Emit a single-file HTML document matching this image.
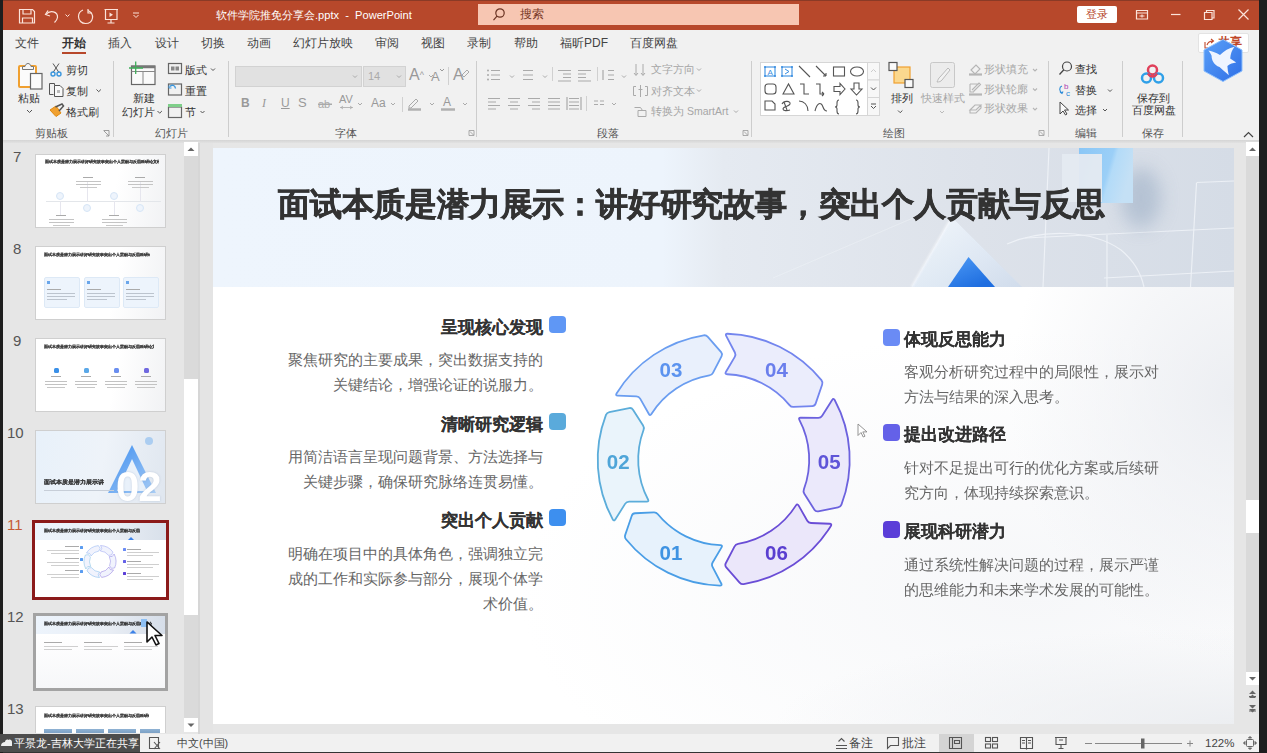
<!DOCTYPE html>
<html><head><meta charset="utf-8">
<style>
*{margin:0;padding:0;box-sizing:border-box}
html,body{width:1267px;height:753px;overflow:hidden;background:#e6e6e6;font-family:"Liberation Sans",sans-serif}
.a{position:absolute;white-space:nowrap}
#tb{left:0;top:0;width:1267px;height:30px;background:#b7482b}
#tabs{left:0;top:30px;width:1267px;height:26px;background:#f1f1f1}
#rib{left:0;top:56px;width:1267px;height:84px;background:#f1f1f1}
.tab{font-size:12px;color:#444;top:37px;line-height:13px}
.rl{font-size:10.5px;color:#333;line-height:12px}
.gl{font-size:10.5px;color:#555;line-height:12px;top:127px}
.dis{color:#a6a6a6}
.sep{width:1px;background:#cfcfcf;top:61px;height:77px}
#left{left:3px;top:143px;width:181px;height:591px;background:#e6e6e6}
.thumb{position:absolute;left:35px;width:131px;height:74px;background:#fff;border:1px solid #c9c9c9;overflow:hidden}
.num{position:absolute;font-size:15px;color:#444;left:13px}
#slide{left:213px;top:148px;width:1021px;height:576px;background:#fff;overflow:hidden}
#status{left:0;top:734px;width:1267px;height:18px;background:#f1f1f1}
.st{font-size:11.5px;color:#444;top:737px;line-height:13px}
.h{font-size:17px;font-weight:bold;color:#333;line-height:20px;-webkit-text-stroke:0.1px #333}
.d{font-size:15px;color:#666;line-height:25px}
.mk{position:absolute;width:17px;height:17px;border-radius:4px}
</style></head><body>
<!-- title bar -->
<div class="a" id="tb"></div>
<div class="a" style="left:0;top:0;width:1267px;height:1px;background:#8a3a26"></div>
<div class="a" style="left:0;top:0;width:3px;height:753px;background:#1e1e1e;z-index:50"></div>
<div class="a" style="left:1259px;top:0;width:8px;height:753px;background:#1e1e1e;z-index:50"></div>
<div class="a" style="left:216px;top:8px;font-size:11.1px;color:#fff;line-height:14px">软件学院推免分享会.pptx&nbsp;&nbsp;-&nbsp;&nbsp;PowerPoint</div>
<div class="a" style="left:478px;top:4px;width:321px;height:21px;background:#f7c6b2"></div>
<div class="a" style="left:520px;top:8px;font-size:11.5px;color:#7a3a28;line-height:13px">搜索</div>
<div class="a" style="left:1077px;top:6px;width:40px;height:17px;background:#fff;border-radius:2px"></div>
<div class="a" style="left:1086px;top:8px;font-size:11px;color:#b7482b;line-height:13px">登录</div>

<!-- tabs -->
<div class="a" id="tabs"></div>
<div class="a tab" style="left:15px">文件</div>
<div class="a tab" style="left:62px;font-weight:bold;color:#333">开始</div>
<div class="a" style="left:62px;top:52px;width:24px;height:2px;background:#b7482b"></div>
<div class="a tab" style="left:108px">插入</div>
<div class="a tab" style="left:155px">设计</div>
<div class="a tab" style="left:201px">切换</div>
<div class="a tab" style="left:247px">动画</div>
<div class="a tab" style="left:293px">幻灯片放映</div>
<div class="a tab" style="left:375px">审阅</div>
<div class="a tab" style="left:421px">视图</div>
<div class="a tab" style="left:467px">录制</div>
<div class="a tab" style="left:514px">帮助</div>
<div class="a tab" style="left:560px">福昕PDF</div>
<div class="a tab" style="left:630px">百度网盘</div>

<!-- ribbon -->
<div class="a" id="rib"></div>
<div class="a" style="left:0;top:140px;width:1267px;height:3px;background:linear-gradient(180deg,#d4d4d4,#e2e2e2)"></div>
<!-- title bar icons -->
<svg class="a" style="left:0;top:0;z-index:5" width="1267" height="30" viewBox="0 0 1267 30" fill="none" stroke="#fbe3da" stroke-width="1.2">
<path d="M19.5 9.5h13l2 2v11.5h-15z"/><path d="M23 9.5v4.5h8v-4.5"/><path d="M22.5 23v-5h10v5"/>
<path d="M48 10.5l-2.5 4 4.5 1.5"/><path d="M46 14.5c4-5 12-3 11.5 3c-0.3 2-1.5 3.5-3 5"/>
<path d="M65.5 14.5l2 2l2-2" stroke-width="1"/>
<path d="M88 10.5c3 1.5 5 4 4.5 7.5c-0.6 3.5-3.5 5.5-7 5.5c-4 0-7-3-7-7c0-3 2-5.5 4.5-6.5"/><path d="M88 9v4h4"/>
<path d="M104.5 9.5h13.5M105.5 9.5v10h11.5v-10M111 19.5v3.5M107.5 23h7"/><path d="M109.5 12.5v4.5l3.5-2.2z" fill="#fbe3da" stroke="none"/>
<path d="M133 13h6M133.5 15l2.5 2.5l2.5-2.5" stroke-width="1"/>
<circle cx="500" cy="13" r="4.2" stroke="#6b3323"/><path d="M497 16.2l-3.5 4" stroke="#6b3323"/>
<path d="M1136.5 10.5h11v8.5h-11zM1136.5 13h11M1139.5 16h5M1142 14.5v3"/>
<path d="M1171 14.5h9.5"/>
<path d="M1204.5 12.5h7.5v7h-7.5zM1206.5 12.5v-2h7.5v7.5h-2"/>
<path d="M1238.5 9.5l10 10M1248.5 9.5l-10 10"/>
</svg>
<!-- ribbon icons -->
<svg class="a" style="left:0;top:56px" width="1267" height="84" viewBox="0 56 1267 84" fill="none" stroke-width="1">
<!-- paste -->
<rect x="19" y="66" width="17" height="21" rx="1" stroke="#f0a030" stroke-width="2" fill="#fbfbfb"/>
<path d="M22.5 69.5v-3h2.5c0.5-2 1.5-3 3-3s2.5 1 3 3h2.5v3z" fill="#f6f6f6" stroke="#777"/>
<rect x="30.5" y="73.5" width="11.5" height="15.5" fill="#fbfbfb" stroke="#666" stroke-width="1.2"/>
<path d="M27 110l2.5 2.5l2.5-2.5" stroke="#555"/>
<!-- scissors -->
<path d="M53 63.5l6 9M59 63.5l-6 9" stroke="#555"/><circle cx="53" cy="74" r="2" stroke="#3a96dd" stroke-width="1.4"/><circle cx="59" cy="74" r="2" stroke="#3a96dd" stroke-width="1.4"/>
<!-- copy -->
<path d="M53.5 94.5h-4v-11h5v2" stroke="#555"/><path d="M54.5 85.5h5.5l3 3v8h-8.5z" stroke="#555" fill="#fafafa"/><rect x="57" y="90" width="3" height="3" fill="#bbb"/>
<path d="M96.5 89.5l2.2 2.2l2.2-2.2" stroke="#555"/>
<!-- format painter -->
<path d="M50 110l6-4l5 7l-5 3.5z" fill="#f0a030" stroke="#e08a10"/><path d="M55.5 107l6.5-3l1.5 2l-4.5 5" stroke="#555" stroke-width="1.5"/>
<!-- new slide -->
<rect x="131.5" y="66" width="23.5" height="18.5" stroke="#666" stroke-width="1.2" fill="#fafafa"/><path d="M131.5 67h23.5" stroke="#777" stroke-width="2.5"/><path d="M131.5 71.5h23.5M143 71.5v13" stroke="#888"/>
<path d="M129 68h14M135.7 61.5v12.5" stroke="#3fae5a" stroke-width="1.3"/>
<path d="M157.5 111l2.2 2.2l2.2-2.2" stroke="#555"/>
<!-- layout -->
<rect x="168.5" y="63.5" width="13" height="10" stroke="#666" stroke-width="1.2"/><rect x="171" y="66.5" width="3.5" height="4" fill="#888" stroke="none"/><rect x="175.5" y="66.5" width="3.5" height="4" fill="#888" stroke="none"/>
<path d="M211 68.5l2 2l2-2" stroke="#555"/>
<!-- reset -->
<rect x="168.5" y="84" width="13" height="11" stroke="#666" stroke-width="1.2"/><path d="M170 86.5c2-2 5-1.5 5.5 2" stroke="#3a96dd" stroke-width="1.4"/><path d="M169 85.5v2.5h2.5" stroke="#3a96dd"/>
<!-- section -->
<rect x="168.5" y="107" width="13" height="10.5" stroke="#666" stroke-width="1.2"/><rect x="168" y="104" width="14" height="3" fill="#7fcf8a" stroke="none"/>
<path d="M200.5 111l2 2l2-2" stroke="#555"/>
<!-- font combos -->
<rect x="235.5" y="66.5" width="126" height="20" fill="#e1e1e1" stroke="#d2d2d2"/><rect x="363.5" y="66.5" width="42" height="20" fill="#e1e1e1" stroke="#d2d2d2"/>
<path d="M353 75.5l2 2l2-2M397 75.5l2 2l2-2" stroke="#aaa"/>
<path d="M429 75l2 2l2-2M391 103l2 2l2-2M358 103l2 2l2-2M463 103l2 2l2-2M430 103l2 2l2-2M510 75.5l2 2l2-2M543 75.5l2 2l2-2M622 75.5l2 2l2-2M612 103l2 2l2-2" stroke="#aaa"/>
<path d="M448.5 67v18M402.5 97v15M552.5 67v14M597.5 67v14M586.5 96v15" stroke="#d0d0d0"/>
<path d="M408 109.5h13" stroke="#b0b0b0" stroke-width="2.5"/><path d="M409 106l7-7l2 2l-7 7h-2z" stroke="#aaa"/>
<path d="M441 109.5h14" stroke="#b0b0b0" stroke-width="2.5"/>
<path d="M318 104h14" stroke="#aaa"/>
<path d="M340 107.5h13M341 107.5l2 -1.5M341 107.5l2 1.5M352 107.5l-2-1.5M352 107.5l-2 1.5" stroke="#aaa" stroke-width="0.8"/>
<!-- eraser -->
<path d="M462 75l5-5l2 2l-5 5z" stroke="#aaa"/>
<!-- paragraph icons -->
<g stroke="#aaa" stroke-width="1.2">
<path d="M491 70.5h9M491 75h9M491 79.5h9M523 70.5h10M523 75h10M523 79.5h10"/>
<path d="M558 70.5h13M563 74h8M563 77.5h8M558 81h13M578 70.5h13M578 74h8M578 77.5h8M578 81h13"/>
<path d="M608 70.5h6M608 75h6M608 79.5h6M603 70v10"/>
<path d="M488 98.5h12M488 102h8M488 105.5h12M488 109h8"/>
<path d="M508 98.5h12M510 102h8M508 105.5h12M510 109h8"/>
<path d="M528 98.5h12M532 102h8M528 105.5h12M532 109h8"/>
<path d="M548 98.5h12M548 102h12M548 105.5h12M548 109h12"/>
<path d="M569 98.5h10M569 102h10M569 105.5h10M569 109h10M567 97v13M581 97v13"/>
<path d="M594 101h4M600 101h4M594 104.5h4M600 104.5h4"/>
</g>
<g fill="#aaa" stroke="none"><circle cx="488" cy="70.5" r="1"/><circle cx="488" cy="75" r="1"/><circle cx="488" cy="79.5" r="1"/></g>
<path d="M636 64v11M634 73l2 2.5l2-2.5M643 64v11M641 73l2 2.5l2-2.5" stroke="#aaa"/>
<path d="M636 86.5h-2.5v9h2.5M645 86.5h2.5v9h-2.5M640.5 85v12M638.5 89.5h4" stroke="#aaa"/>
<path d="M634.5 107.5h6l2 3M638 110.5h8v6h-8z" stroke="#aaa"/>
<path d="M697 68.5l2 2l2-2M697 89.5l2 2l2-2M734 110.5l2 2l2-2" stroke="#aaa"/>
<path d="M318 104.5h14" stroke="#aaa"/>
<!-- shapes gallery -->
<rect x="760.5" y="62.5" width="107" height="53" fill="#fff" stroke="#d6d6d6"/>
<rect x="867.5" y="62.5" width="12" height="17.5" fill="#f7f7f7" stroke="#d6d6d6"/><rect x="867.5" y="80" width="12" height="17.5" fill="#f7f7f7" stroke="#d6d6d6"/><rect x="867.5" y="97.5" width="12" height="18" fill="#f7f7f7" stroke="#d6d6d6"/>
<path d="M871 72l2.5-2.5l2.5 2.5" stroke="#ccc"/><path d="M871 87.5l2.5 2.5l2.5-2.5" stroke="#555"/><path d="M871 104h5M871 106l2.5 2.5l2.5-2.5" stroke="#555"/>
<g stroke="#555" stroke-width="1.1">
<rect x="765" y="67" width="10" height="9" stroke="#3a8ee0"/><rect x="782" y="67" width="10" height="9" stroke="#3a8ee0"/>
<path d="M799 66l11 11M816 66l10 10M826 76l-3 0M826 76l0-3"/>
<rect x="833.5" y="67" width="11" height="9"/><ellipse cx="857" cy="71.5" rx="6.5" ry="4.5"/>
<rect x="765" y="84" width="11" height="10" rx="3"/><path d="M783 94l5.5-10l5.5 10z"/>
<path d="M800 84h4v10h5M816 84h4v10h4M824 94l-2-2M824 94l-2 2"/>
<path d="M834 86.5h6v-3l5 5.5l-5 5.5v-3h-6z"/><path d="M854 83h5v6h3l-5.5 6l-5.5-6h3z"/>
<path d="M765 101h7l3 3v6h-10z"/><path d="M782 104c2-4 9-3 8 0c-1 3-7 2-7 5c0 2 4 2 7 1M784 102l3 8"/>
<path d="M799 101c5 0 9 4 9 10M815 111c2-8 6-10 8-4c1 3 2 4 4 4"/>
<path d="M839 100c-2 0-2 1-2 3v2c0 1-1 2-2 2c1 0 2 1 2 2v2c0 2 0 3 2 3M856 100c2 0 2 1 2 3v2c0 1 1 2 2 2c-1 0-2 1-2 2v2c0 2 0 3-2 3"/>
</g>
<circle cx="765" cy="67" r="1" fill="#3a8ee0"/><circle cx="775" cy="67" r="1" fill="#3a8ee0"/><circle cx="765" cy="76" r="1" fill="#3a8ee0"/><circle cx="775" cy="76" r="1" fill="#3a8ee0"/>
<circle cx="782" cy="67" r="1" fill="#3a8ee0"/><circle cx="792" cy="67" r="1" fill="#3a8ee0"/><circle cx="782" cy="76" r="1" fill="#3a8ee0"/><circle cx="792" cy="76" r="1" fill="#3a8ee0"/>
<text x="767.5" y="74.5" font-size="8" font-family="Liberation Sans" fill="#3a8ee0" stroke="none">A</text><path d="M785 69l4 2.5l-4 2.5" stroke="#3a8ee0"/>
<!-- arrange -->
<rect x="894" y="67" width="16" height="16" fill="#fbd88e" stroke="#f0a030" stroke-width="1.2"/>
<rect x="889" y="62.5" width="8" height="8" fill="#fafafa" stroke="#555" stroke-width="1.2"/><rect x="905" y="79.5" width="8" height="8" fill="#fafafa" stroke="#555" stroke-width="1.2"/>
<path d="M898 110.5l2.2 2.2l2.2-2.2" stroke="#555"/>
<!-- quick styles -->
<rect x="930.5" y="62.5" width="24" height="25" rx="2" fill="#ececec" stroke="#c8c8c8"/><path d="M950 70l-8 10c-1 1.5-3 2-5 2c1-2 1.5-4 3-5l8-9z" stroke="#bbb" fill="#f2f2f2"/>
<path d="M940 111l2 2l2-2" stroke="#bbb"/>
<g stroke="#b5b5b5" stroke-width="1.1">
<path d="M969 74.5h13" stroke-width="2.2"/><path d="M971 70l5-5l4 4l-5 5z"/>
<path d="M969 94.5h13" stroke-width="2.2"/><path d="M970 84h9M970 84v8h4M972 90l7-7l1.5 1.5l-7 7"/>
<path d="M970 110l5-5h6l-5 5z M970 110v3h6l5-5v-3"/>
<path d="M1033 69l2 2l2-2M1033 88.5l2 2l2-2M1033 108l2 2l2-2"/>
</g>
<!-- find replace select -->
<circle cx="1067" cy="66.5" r="4.5" stroke="#444" stroke-width="1.2"/><path d="M1063.8 69.8l-4.3 4.7" stroke="#444" stroke-width="1.3"/>
<text x="1064" y="89" font-size="8" font-family="Liberation Sans" fill="#b040b0">b</text><text x="1066" y="96" font-size="8" font-family="Liberation Sans" fill="#2a8ad8">c</text>
<path d="M1062 86c-3 1-3 5 0 7M1060 92l2 1.5l1-2" stroke="#2a8ad8" stroke-width="1.1"/>
<path d="M1108 89.5l2 2l2-2M1103 109l2 2l2-2" stroke="#555"/>
<path d="M1060 102v12l3-3l2.5 4l1.5-1l-2.5-4h4z" stroke="#444" fill="#fafafa"/>
<!-- baidu -->
<circle cx="1152.5" cy="70" r="4.5" stroke="#e0405a" stroke-width="2.5"/>
<circle cx="1146.5" cy="78" r="4.5" stroke="#2fa0e8" stroke-width="2.5"/><circle cx="1158.5" cy="78" r="4.5" stroke="#2fa0e8" stroke-width="2.5"/>
<path d="M1148 73.5c1 2 3 3 4.5 3s3.5-1 4.5-3" stroke="#e0405a" stroke-width="2.3"/>
<!-- separators -->
<path d="M113.5 61v76M228.5 61v76M476.5 61v76M751.5 61v76M1048.5 61v76M1122.5 61v76M1182.5 61v76" stroke="#cdcdcd"/>
<!-- launchers -->
<path d="M103.5 130.5h5.5v5.5M104 131l5 5M106 136h3" stroke="#888" stroke-width="0.8"/>
<path d="M469 130.5h5v5h-5zM470 131.5l3.5 3.5" stroke="#999" stroke-width="0.8"/>
<path d="M743 130.5h5v5h-5zM744 131.5l3.5 3.5" stroke="#999" stroke-width="0.8"/>
<path d="M1039 130.5h5v5h-5zM1040 131.5l3.5 3.5" stroke="#999" stroke-width="0.8"/>
<path d="M1244 137l4.5-4.5l4.5 4.5" stroke="#444" stroke-width="1.2"/>
</svg>
<!-- ribbon text -->
<div class="a rl" style="left:18px;top:92px;font-size:11px">粘贴</div>
<div class="a rl" style="left:66px;top:64px">剪切</div>
<div class="a rl" style="left:66px;top:85px">复制</div>
<div class="a rl" style="left:66px;top:106px">格式刷</div>
<div class="a rl" style="left:133px;top:92px;font-size:11px">新建</div>
<div class="a rl" style="left:122px;top:106px;font-size:11px">幻灯片</div>
<div class="a rl" style="left:185px;top:64px">版式</div>
<div class="a rl" style="left:185px;top:85px">重置</div>
<div class="a rl" style="left:185px;top:106px">节</div>
<div class="a gl" style="left:35px">剪贴板</div>
<div class="a gl" style="left:155px">幻灯片</div>
<div class="a gl" style="left:335px">字体</div>
<div class="a gl" style="left:597px">段落</div>
<div class="a gl" style="left:883px">绘图</div>
<div class="a gl" style="left:1075px">编辑</div>
<div class="a gl" style="left:1142px">保存</div>
<div class="a" style="left:368px;top:70px;font-size:11px;color:#aaa;line-height:13px">14</div>
<div class="a" style="left:409px;top:66px;font-size:16px;color:#999;line-height:18px">A<span style="font-size:9px;vertical-align:top">^</span></div>
<div class="a" style="left:431px;top:69px;font-size:13px;color:#999;line-height:15px">A</div><svg class="a" style="left:439px;top:68px" width="6" height="5"><path d="M1 1l2 2l2-2" stroke="#999" fill="none"/></svg>
<div class="a" style="left:453px;top:66px;font-size:16px;color:#999;line-height:18px">A</div>
<div class="a" style="left:241px;top:96px;font-size:12px;color:#999;line-height:14px;font-weight:bold">B</div>
<div class="a" style="left:262px;top:96px;font-size:12px;color:#999;line-height:14px;font-style:italic;font-family:'Liberation Serif',serif">I</div>
<div class="a" style="left:281px;top:96px;font-size:12px;color:#999;line-height:14px;text-decoration:underline">U</div>
<div class="a" style="left:298px;top:96px;font-size:13px;color:#999;line-height:14px">S</div>
<div class="a" style="left:318px;top:97px;font-size:11px;color:#aaa;line-height:14px">ab</div>
<div class="a" style="left:339px;top:93px;font-size:11px;color:#999;line-height:12px">AV</div>
<div class="a" style="left:371px;top:96px;font-size:12px;color:#999;line-height:14px">Aa</div>
<div class="a" style="left:443px;top:96px;font-size:12px;color:#999;line-height:13px">A</div>
<div class="a rl dis" style="left:651px;top:63px">文字方向</div>
<div class="a rl dis" style="left:651px;top:85px">对齐文本</div>
<div class="a rl dis" style="left:651px;top:105px">转换为 SmartArt</div>
<div class="a rl" style="left:891px;top:92px;font-size:11px">排列</div>
<div class="a rl dis" style="left:921px;top:92px">快速样式</div>
<div class="a rl dis" style="left:984px;top:63px">形状填充</div>
<div class="a rl dis" style="left:984px;top:83px">形状轮廓</div>
<div class="a rl dis" style="left:984px;top:102px">形状效果</div>
<div class="a rl" style="left:1075px;top:63px">查找</div>
<div class="a rl" style="left:1075px;top:84px">替换</div>
<div class="a rl" style="left:1075px;top:104px">选择</div>
<div class="a rl" style="left:1137px;top:92px">保存到</div>
<div class="a rl" style="left:1132px;top:104px">百度网盘</div>
<!-- share button + logo -->
<div class="a" style="left:1198px;top:33px;width:51px;height:20px;background:#fff;border:1px solid #e3e3e3;border-radius:2px"></div>
<div class="a" style="left:1218px;top:35px;font-size:12px;color:#c0482a;font-weight:bold;line-height:14px">共享</div>
<svg class="a" style="left:1203px;top:37px" width="12" height="12" fill="none" stroke="#c0482a" stroke-width="1.1"><path d="M2 5v6h8M4 8c1-3 3-4 6-4M8 2l2.5 2l-2.5 2"/></svg>
<svg class="a" style="left:1201px;top:38px;z-index:6" width="44" height="45" viewBox="0 0 44 45">
<defs><linearGradient id="lg1" x1="0" y1="0" x2="1" y2="1"><stop offset="0" stop-color="#5aa0f8"/><stop offset="1" stop-color="#2f6fe6"/></linearGradient></defs>
<path d="M22 1.5l19 10.5v21l-19 10.5l-19-10.5v-21z" fill="url(#lg1)" stroke="#8cc0ff" stroke-width="1"/>
<path d="M7.3 12.6C10 13 15 14.5 19 17C23 13 28 10 33.6 8.8C31 12 29.5 16 29.2 20.5L35.2 24.6C32 25 29 26 26.4 27.9C26.5 31 27 34 27.8 37.2C24 34 21 31 18.5 29C13 27 10.5 22 10.6 17.7C9.5 15.5 8.5 13.8 7.3 12.6Z" fill="#eef4ff"/>
</svg>


<!-- left panel -->
<div class="a" id="left"></div>
<div class="a" style="left:184px;top:142px;width:14px;height:590px;background:#dadada"></div>
<div class="a" style="left:184px;top:379px;width:14px;height:236px;background:#fff"></div>
<div class="a" style="left:200px;top:143px;width:13px;height:591px;background:#e4e4e4"></div>
<div class="a" style="left:198px;top:143px;width:2px;height:591px;background:#d6d6d6"></div>
<!--THUMBS-->
<div class="a" style="left:13px;top:149px;font-size:15px;color:#555;line-height:16px">7</div>
<div class="a" style="left:13px;top:241px;font-size:15px;color:#555;line-height:16px">8</div>
<div class="a" style="left:13px;top:333px;font-size:15px;color:#555;line-height:16px">9</div>
<div class="a" style="left:7px;top:425px;font-size:15px;color:#555;line-height:16px">10</div>
<div class="a" style="left:7px;top:517px;font-size:15px;color:#c55a35;line-height:16px">11</div>
<div class="a" style="left:7px;top:609px;font-size:15px;color:#555;line-height:16px">12</div>
<div class="a" style="left:7px;top:701px;font-size:15px;color:#555;line-height:16px">13</div>
<div class="a" style="left:35px;top:154px;width:131px;height:74px;background:linear-gradient(100deg,#fff 60%,#f1f2f4 100%);border:1px solid #cfcfcf;overflow:hidden"><div class="a" style="left:0;top:0;width:131px;height:74px;filter:blur(0.35px)"><div class="a" style="left:9px;top:5.5px;width:114px;height:2.5px;background:rgba(120,120,120,.25);border-radius:0px"></div><div class="a" style="left:9px;top:4px;font-size:4.35px;line-height:5px;color:#222;font-weight:bold;opacity:.85;width:114px;overflow:hidden;text-shadow:0 0 .4px #000">面试本质是潜力展示讲好研究故事突出个人贡献与反思科研论文经验</div><div class="a" style="left:10px;top:46px;width:115px;height:1px;background:#e3e6ea;border-radius:0px"></div><div class="a" style="left:20px;top:37px;width:8px;height:8px;border-radius:50%;background:#eef4fc;border:1px solid #d5e4f5"></div><div class="a" style="left:47px;top:49px;width:8px;height:8px;border-radius:50%;background:#eef4fc;border:1px solid #d5e4f5"></div><div class="a" style="left:74px;top:37px;width:8px;height:8px;border-radius:50%;background:#eef4fc;border:1px solid #d5e4f5"></div><div class="a" style="left:100px;top:49px;width:8px;height:8px;border-radius:50%;background:#eef4fc;border:1px solid #d5e4f5"></div><div class="a" style="left:51px;top:27px;width:1px;height:20px;background:#e6e6ee;border-radius:0px"></div><div class="a" style="left:104px;top:27px;width:1px;height:20px;background:#e6e6ee;border-radius:0px"></div><div class="a" style="left:24px;top:46px;width:1px;height:14px;background:#e6e6ee;border-radius:0px"></div><div class="a" style="left:78px;top:46px;width:1px;height:14px;background:#e6e6ee;border-radius:0px"></div><div class="a" style="left:47px;top:22px;width:10px;height:1.2px;background:#aaa;border-radius:0px"></div><div class="a" style="left:40px;top:26px;width:25px;height:1px;background:#c4c4c4;border-radius:0px"></div><div class="a" style="left:40px;top:29px;width:25px;height:1px;background:#c4c4c4;border-radius:0px"></div><div class="a" style="left:44px;top:32px;width:17px;height:1px;background:#c8c8c8;border-radius:0px"></div><div class="a" style="left:99px;top:22px;width:10px;height:1.2px;background:#aaa;border-radius:0px"></div><div class="a" style="left:92px;top:26px;width:25px;height:1px;background:#c4c4c4;border-radius:0px"></div><div class="a" style="left:92px;top:29px;width:25px;height:1px;background:#c4c4c4;border-radius:0px"></div><div class="a" style="left:96px;top:32px;width:17px;height:1px;background:#c8c8c8;border-radius:0px"></div><div class="a" style="left:20px;top:60px;width:10px;height:1.2px;background:#aaa;border-radius:0px"></div><div class="a" style="left:13px;top:64px;width:25px;height:1px;background:#c4c4c4;border-radius:0px"></div><div class="a" style="left:13px;top:67px;width:25px;height:1px;background:#c4c4c4;border-radius:0px"></div><div class="a" style="left:17px;top:70px;width:17px;height:1px;background:#c8c8c8;border-radius:0px"></div><div class="a" style="left:73px;top:60px;width:10px;height:1.2px;background:#aaa;border-radius:0px"></div><div class="a" style="left:66px;top:64px;width:25px;height:1px;background:#c4c4c4;border-radius:0px"></div><div class="a" style="left:66px;top:67px;width:25px;height:1px;background:#c4c4c4;border-radius:0px"></div><div class="a" style="left:70px;top:70px;width:17px;height:1px;background:#c8c8c8;border-radius:0px"></div></div></div>
<div class="a" style="left:35px;top:246px;width:131px;height:74px;background:linear-gradient(100deg,#fff 60%,#f1f2f4 100%);border:1px solid #cfcfcf;overflow:hidden"><div class="a" style="left:0;top:0;width:131px;height:74px;filter:blur(0.35px)"><div class="a" style="left:8px;top:6.5px;width:106px;height:2.5px;background:rgba(120,120,120,.25);border-radius:0px"></div><div class="a" style="left:8px;top:5px;font-size:4.35px;line-height:5px;color:#222;font-weight:bold;opacity:.85;width:106px;overflow:hidden;text-shadow:0 0 .4px #000">面试本质是潜力展示讲好研究故事突出个人贡献与反思科研论文</div><div class="a" style="left:8px;top:30px;width:36px;height:31px;background:#edf4fc;border:1px solid #dde9f6;border-radius:2px"></div><div class="a" style="left:11px;top:34px;width:3px;height:3px;background:#6aa6ea;border-radius:0px"></div><div class="a" style="left:11px;top:42px;width:14px;height:1.2px;background:#aaa;border-radius:0px"></div><div class="a" style="left:11px;top:46px;width:28px;height:1px;background:#bcc4ce;border-radius:0px"></div><div class="a" style="left:11px;top:49px;width:28px;height:1px;background:#bcc4ce;border-radius:0px"></div><div class="a" style="left:11px;top:52px;width:20px;height:1px;background:#bcc4ce;border-radius:0px"></div><div class="a" style="left:48px;top:30px;width:36px;height:31px;background:#edf4fc;border:1px solid #dde9f6;border-radius:2px"></div><div class="a" style="left:51px;top:34px;width:3px;height:3px;background:#6aa6ea;border-radius:0px"></div><div class="a" style="left:51px;top:42px;width:14px;height:1.2px;background:#aaa;border-radius:0px"></div><div class="a" style="left:51px;top:46px;width:28px;height:1px;background:#bcc4ce;border-radius:0px"></div><div class="a" style="left:51px;top:49px;width:28px;height:1px;background:#bcc4ce;border-radius:0px"></div><div class="a" style="left:51px;top:52px;width:20px;height:1px;background:#bcc4ce;border-radius:0px"></div><div class="a" style="left:87px;top:30px;width:36px;height:31px;background:#edf4fc;border:1px solid #dde9f6;border-radius:2px"></div><div class="a" style="left:90px;top:34px;width:3px;height:3px;background:#6aa6ea;border-radius:0px"></div><div class="a" style="left:90px;top:42px;width:14px;height:1.2px;background:#aaa;border-radius:0px"></div><div class="a" style="left:90px;top:46px;width:28px;height:1px;background:#bcc4ce;border-radius:0px"></div><div class="a" style="left:90px;top:49px;width:28px;height:1px;background:#bcc4ce;border-radius:0px"></div><div class="a" style="left:90px;top:52px;width:20px;height:1px;background:#bcc4ce;border-radius:0px"></div></div></div>
<div class="a" style="left:35px;top:338px;width:131px;height:74px;background:linear-gradient(100deg,#fff 60%,#f1f2f4 100%);border:1px solid #cfcfcf;overflow:hidden"><div class="a" style="left:0;top:0;width:131px;height:74px;filter:blur(0.35px)"><div class="a" style="left:8px;top:6.5px;width:110px;height:2.5px;background:rgba(120,120,120,.25);border-radius:0px"></div><div class="a" style="left:8px;top:5px;font-size:4.35px;line-height:5px;color:#222;font-weight:bold;opacity:.85;width:110px;overflow:hidden;text-shadow:0 0 .4px #000">面试本质是潜力展示讲好研究故事突出个人贡献与反思科研论文经</div><div class="a" style="left:18px;top:29px;width:5px;height:5px;background:#3a90e8;border-radius:1.5px"></div><div class="a" style="left:15px;top:37px;width:10px;height:1px;background:#aaa;border-radius:0px"></div><div class="a" style="left:9px;top:42px;width:22px;height:1px;background:#c2c2c2;border-radius:0px"></div><div class="a" style="left:9px;top:45px;width:22px;height:1px;background:#c2c2c2;border-radius:0px"></div><div class="a" style="left:11px;top:48px;width:18px;height:1px;background:#c6c6c6;border-radius:0px"></div><div class="a" style="left:48px;top:29px;width:5px;height:5px;background:#5aa8e8;border-radius:1.5px"></div><div class="a" style="left:45px;top:37px;width:10px;height:1px;background:#aaa;border-radius:0px"></div><div class="a" style="left:39px;top:42px;width:22px;height:1px;background:#c2c2c2;border-radius:0px"></div><div class="a" style="left:39px;top:45px;width:22px;height:1px;background:#c2c2c2;border-radius:0px"></div><div class="a" style="left:41px;top:48px;width:18px;height:1px;background:#c6c6c6;border-radius:0px"></div><div class="a" style="left:78px;top:29px;width:5px;height:5px;background:#6a8ef0;border-radius:1.5px"></div><div class="a" style="left:75px;top:37px;width:10px;height:1px;background:#aaa;border-radius:0px"></div><div class="a" style="left:69px;top:42px;width:22px;height:1px;background:#c2c2c2;border-radius:0px"></div><div class="a" style="left:69px;top:45px;width:22px;height:1px;background:#c2c2c2;border-radius:0px"></div><div class="a" style="left:71px;top:48px;width:18px;height:1px;background:#c6c6c6;border-radius:0px"></div><div class="a" style="left:108px;top:29px;width:5px;height:5px;background:#7068e0;border-radius:1.5px"></div><div class="a" style="left:105px;top:37px;width:10px;height:1px;background:#aaa;border-radius:0px"></div><div class="a" style="left:99px;top:42px;width:22px;height:1px;background:#c2c2c2;border-radius:0px"></div><div class="a" style="left:99px;top:45px;width:22px;height:1px;background:#c2c2c2;border-radius:0px"></div><div class="a" style="left:101px;top:48px;width:18px;height:1px;background:#c6c6c6;border-radius:0px"></div></div></div>
<div class="a" style="left:35px;top:430px;width:131px;height:74px;background:linear-gradient(100deg,#fff 60%,#f1f2f4 100%);border:1px solid #cfcfcf;overflow:hidden"><div class="a" style="left:0;top:0;width:131px;height:74px;filter:blur(0.35px)"><div class="a" style="left:0;top:0;width:131px;height:74px;background:linear-gradient(100deg,#e8f1fa 0%,#eef3f9 50%,#dfe6ef 100%)"></div><svg class="a" style="left:0;top:0" width="131" height="74"><defs><linearGradient id="t10g" x1="0" y1="0" x2="1" y2="1"><stop offset="0" stop-color="#3d8ef0"/><stop offset="1" stop-color="#a9cdf5"/></linearGradient></defs><path d="M96 14l-24 48h48z" fill="url(#t10g)"/><path d="M96 28l-15 32h30z" fill="#e9f1fa"/><circle cx="113" cy="10" r="4" fill="#9cc6f0" opacity=".8"/></svg><div class="a" style="left:80px;top:34px;font-size:42px;font-weight:bold;color:#fff;line-height:44px;letter-spacing:-1px;text-shadow:0 0 2px rgba(140,160,190,.5)">02</div><div class="a" style="left:8px;top:49.5px;width:60px;height:3.5px;background:rgba(120,120,120,.25);border-radius:0px"></div><div class="a" style="left:8px;top:48px;font-size:5.80px;line-height:6px;color:#222;font-weight:bold;opacity:.85;width:60px;overflow:hidden;text-shadow:0 0 .4px #000">面试本质是潜力展示讲好研究故</div><div class="a" style="left:8px;top:59px;width:70px;height:1px;background:#c7ced8;border-radius:0px"></div></div></div>
<div class="a" style="left:32px;top:520px;width:137px;height:80px;border:3px solid #8b1a1a"></div>
<div class="a" style="left:35px;top:523px;width:131px;height:74px;background:#fff;overflow:hidden"><div class="a" style="left:0;top:0;width:131px;height:17px;background:linear-gradient(90deg,#edf4fc 0%,#e9eef5 60%,#d8e0ea 100%)"></div><div class="a" style="left:9px;top:6.5px;width:96px;height:2.5px;background:rgba(120,120,120,.25);border-radius:0px"></div><div class="a" style="left:9px;top:5px;font-size:4.35px;line-height:5px;color:#222;font-weight:bold;opacity:.85;width:96px;overflow:hidden;text-shadow:0 0 .4px #000">面试本质是潜力展示讲好研究故事突出个人贡献与反思科研</div><svg class="a" style="left:0;top:0" width="131" height="74"><path d="M96 14l-3 3h6z" fill="#3c82e8"/><path d="M64.44,54.49 A16,16 0 0 1 52.06,47.90 L53.43,44.95 L56.51,44.67 A10.5,10.5 0 0 0 64.63,48.99 L63.22,51.63 Z" fill="#f1f3fd" stroke="#62a8e8" stroke-width="0.55" stroke-opacity=".8"/><path d="M50.87,46.01 A16,16 0 0 1 50.38,31.99 L53.63,31.70 L55.41,34.23 A10.5,10.5 0 0 0 55.73,43.43 L52.74,43.52 Z" fill="#f1f3fd" stroke="#6ab3dd" stroke-width="0.55" stroke-opacity=".8"/><path d="M51.43,30.02 A16,16 0 0 1 63.33,22.59 L65.20,25.25 L63.90,28.06 A10.5,10.5 0 0 0 56.10,32.94 L54.52,30.39 Z" fill="#f1f3fd" stroke="#7aa5f0" stroke-width="0.55" stroke-opacity=".8"/><path d="M65.56,22.51 A16,16 0 0 1 77.94,29.10 L76.57,32.05 L73.49,32.33 A10.5,10.5 0 0 0 65.37,28.01 L66.78,25.37 Z" fill="#f1f3fd" stroke="#8690ee" stroke-width="0.55" stroke-opacity=".8"/><path d="M79.13,30.99 A16,16 0 0 1 79.62,45.01 L76.37,45.30 L74.59,42.77 A10.5,10.5 0 0 0 74.27,33.57 L77.26,33.48 Z" fill="#f1f3fd" stroke="#7d72e0" stroke-width="0.55" stroke-opacity=".8"/><path d="M78.57,46.98 A16,16 0 0 1 66.67,54.41 L64.80,51.75 L66.10,48.94 A10.5,10.5 0 0 0 73.90,44.06 L75.48,46.61 Z" fill="#f1f3fd" stroke="#7a60d8" stroke-width="0.55" stroke-opacity=".8"/></svg><div class="a" style="left:30px;top:23px;width:14px;height:1.2px;background:#aaa;border-radius:0px"></div><div class="a" style="left:45px;top:22.5px;width:3px;height:3px;background:#5a9cf0;border-radius:0.5px"></div><div class="a" style="left:12px;top:27px;width:32px;height:1px;background:#cfcfcf;border-radius:0px"></div><div class="a" style="left:16px;top:30px;width:28px;height:1px;background:#cfcfcf;border-radius:0px"></div><div class="a" style="left:30px;top:35px;width:14px;height:1.2px;background:#aaa;border-radius:0px"></div><div class="a" style="left:45px;top:34.5px;width:3px;height:3px;background:#5a9cf0;border-radius:0.5px"></div><div class="a" style="left:12px;top:39px;width:32px;height:1px;background:#cfcfcf;border-radius:0px"></div><div class="a" style="left:16px;top:42px;width:28px;height:1px;background:#cfcfcf;border-radius:0px"></div><div class="a" style="left:30px;top:47px;width:14px;height:1.2px;background:#aaa;border-radius:0px"></div><div class="a" style="left:45px;top:46.5px;width:3px;height:3px;background:#5a9cf0;border-radius:0.5px"></div><div class="a" style="left:12px;top:51px;width:32px;height:1px;background:#cfcfcf;border-radius:0px"></div><div class="a" style="left:16px;top:54px;width:28px;height:1px;background:#cfcfcf;border-radius:0px"></div><div class="a" style="left:88px;top:25px;width:3px;height:3px;background:#6a8bf5;border-radius:0.5px"></div><div class="a" style="left:92px;top:25.5px;width:14px;height:1.2px;background:#aaa;border-radius:0px"></div><div class="a" style="left:92px;top:29px;width:32px;height:1px;background:#cfcfcf;border-radius:0px"></div><div class="a" style="left:92px;top:32px;width:26px;height:1px;background:#cfcfcf;border-radius:0px"></div><div class="a" style="left:88px;top:37px;width:3px;height:3px;background:#6461e8;border-radius:0.5px"></div><div class="a" style="left:92px;top:37.5px;width:14px;height:1.2px;background:#aaa;border-radius:0px"></div><div class="a" style="left:92px;top:41px;width:32px;height:1px;background:#cfcfcf;border-radius:0px"></div><div class="a" style="left:92px;top:44px;width:26px;height:1px;background:#cfcfcf;border-radius:0px"></div><div class="a" style="left:88px;top:49px;width:3px;height:3px;background:#5b3ed8;border-radius:0.5px"></div><div class="a" style="left:92px;top:49.5px;width:14px;height:1.2px;background:#aaa;border-radius:0px"></div><div class="a" style="left:92px;top:53px;width:32px;height:1px;background:#cfcfcf;border-radius:0px"></div><div class="a" style="left:92px;top:56px;width:26px;height:1px;background:#cfcfcf;border-radius:0px"></div></div>
<div class="a" style="left:33px;top:613px;width:135px;height:78px;border:3px solid #a3a3a3"></div>
<div class="a" style="left:36px;top:616px;width:129px;height:72px;background:#fff;overflow:hidden"><div class="a" style="left:0;top:0;width:131px;height:18px;background:linear-gradient(90deg,#edf4fc 0%,#e9eef5 55%,#d5dde8 100%)"></div><div class="a" style="left:8px;top:6.5px;width:108px;height:2.5px;background:rgba(120,120,120,.25);border-radius:0px"></div><div class="a" style="left:8px;top:5px;font-size:4.35px;line-height:5px;color:#222;font-weight:bold;opacity:.85;width:108px;overflow:hidden;text-shadow:0 0 .4px #000">面试本质是潜力展示讲好研究故事突出个人贡献与反思科研论文</div><svg class="a" style="left:0;top:0" width="131" height="74"><path d="M97 14l-3.5 3.5h7z" fill="#3c82e8"/><rect x="105" y="3" width="6" height="8" fill="#8ec0f4"/></svg><div class="a" style="left:0;top:18px;width:131px;height:56px;background:linear-gradient(180deg,#fff 0%,#f6f7f9 100%)"></div><div class="a" style="left:8px;top:26px;width:18px;height:1.2px;background:#aaa;border-radius:0px"></div><div class="a" style="left:8px;top:30px;width:34px;height:1px;background:#cfcfcf;border-radius:0px"></div><div class="a" style="left:8px;top:33px;width:28px;height:1px;background:#cfcfcf;border-radius:0px"></div><div class="a" style="left:48px;top:26px;width:18px;height:1.2px;background:#aaa;border-radius:0px"></div><div class="a" style="left:48px;top:30px;width:34px;height:1px;background:#cfcfcf;border-radius:0px"></div><div class="a" style="left:48px;top:33px;width:28px;height:1px;background:#cfcfcf;border-radius:0px"></div><div class="a" style="left:88px;top:26px;width:18px;height:1.2px;background:#aaa;border-radius:0px"></div><div class="a" style="left:88px;top:30px;width:34px;height:1px;background:#cfcfcf;border-radius:0px"></div><div class="a" style="left:88px;top:33px;width:28px;height:1px;background:#cfcfcf;border-radius:0px"></div></div>
<div class="a" style="left:35px;top:706px;width:131px;height:27px;background:#fff;border:1px solid #cfcfcf;border-bottom:none;overflow:hidden"><div class="a" style="left:8px;top:7.5px;width:105px;height:2.5px;background:rgba(120,120,120,.25);border-radius:0px"></div><div class="a" style="left:8px;top:6px;font-size:4.35px;line-height:5px;color:#222;font-weight:bold;opacity:.85;width:105px;overflow:hidden;text-shadow:0 0 .4px #000">面试本质是潜力展示讲好研究故事突出个人贡献与反思科研论文</div><div class="a" style="left:8px;top:22px;width:28px;height:10px;background:linear-gradient(180deg,#8fb2d4,#5f86ad)"></div><div class="a" style="left:40px;top:22px;width:28px;height:10px;background:linear-gradient(180deg,#8fb2d4,#5f86ad)"></div><div class="a" style="left:72px;top:22px;width:28px;height:10px;background:linear-gradient(180deg,#8fb2d4,#5f86ad)"></div><div class="a" style="left:104px;top:22px;width:20px;height:10px;background:linear-gradient(180deg,#8fb2d4,#5f86ad)"></div></div>
<div class="a" style="left:184px;top:142px;width:14px;height:14px;background:#fff"></div>
<svg class="a" style="left:184px;top:142px" width="14" height="14"><path d="M3.5 9l3.5-3.5l3.5 3.5z" fill="#666"/></svg>
<div class="a" style="left:184px;top:718px;width:14px;height:14px;background:#fff"></div>
<svg class="a" style="left:184px;top:718px" width="14" height="14"><path d="M3.5 5.5l3.5 3.5l3.5-3.5z" fill="#666"/></svg>
<svg class="a" style="left:145px;top:620px;z-index:20" width="20" height="28" viewBox="0 0 20 28"><path d="M2 2v20l5-5l4 8l3-1.5l-4-8h7z" fill="#fff" stroke="#111" stroke-width="1.6" stroke-linejoin="round"/></svg>
<!--/THUMBS-->

<!-- slide -->
<div class="a" id="slide">
<svg class="a" style="left:0;top:0" width="1021" height="139" viewBox="0 0 1021 139">
<defs>
<linearGradient id="hbg" x1="0" y1="0" x2="1" y2="0"><stop offset="0" stop-color="#eef5fd"/><stop offset="0.44" stop-color="#edf4fc"/><stop offset="0.5" stop-color="#e5eaf1"/><stop offset="0.75" stop-color="#dde2ea"/><stop offset="1" stop-color="#d5dce6"/></linearGradient>
<linearGradient id="tri1" x1="0" y1="0" x2="1" y2="1"><stop offset="0" stop-color="#f4f8fd"/><stop offset="0.6" stop-color="#dfe9f5"/><stop offset="1" stop-color="#cfdcec"/></linearGradient>
<linearGradient id="tri2" x1="0" y1="0" x2="0.6" y2="1"><stop offset="0" stop-color="#4d9af5"/><stop offset="1" stop-color="#1f6ee0"/></linearGradient>
<linearGradient id="cube" x1="0" y1="0" x2="1" y2="0.3"><stop offset="0" stop-color="#8ac6f6"/><stop offset="0.6" stop-color="#9bcff7"/><stop offset="0.68" stop-color="#b3dbf8"/><stop offset="1" stop-color="#c4e0f5"/></linearGradient>
<filter id="blur8" x="-50%" y="-50%" width="200%" height="200%"><feGaussianBlur stdDeviation="9"/></filter>
<filter id="blur2"><feGaussianBlur stdDeviation="1.2"/></filter>
</defs>
<rect width="1021" height="139" fill="url(#hbg)"/>
<g stroke="#f4f7fb" stroke-width="1.2" fill="none" opacity="0.75">
<path d="M836 0L830 139"/>
<path d="M983.5 35L977.5 139"/>
<path d="M983.5 34.5L1021 33"/>
<path d="M812 90L1021 80"/>
<path d="M891 130L1021 123"/>
<path d="M894 87v52"/>
<path d="M794 96C830 80 880 82 908 102C920 112 928 125 931 139"/>
<path d="M560 130L700 70" opacity="0.5"/>
</g>
<ellipse cx="928" cy="50" rx="20" ry="30" fill="#a3b4c9" filter="url(#blur8)" opacity="0.65"/>
<rect x="866" y="0" width="54" height="55" fill="url(#cube)"/>
<rect x="849" y="6" width="40" height="48" fill="#e5eaf1" opacity="0.95"/>
<path d="M738.6 69L698.5 139H809z" fill="url(#tri1)" opacity="0.9"/>
<path d="M738.6 69L698.5 139" stroke="#fff" stroke-width="1.5" opacity="0.8" filter="url(#blur2)"/>
<path d="M755.5 109L735 139H782z" fill="url(#tri2)"/>
</svg>

<div class="a" style="left:65px;top:36px;font-size:32px;font-weight:bold;color:#333;line-height:40px;letter-spacing:-0.2px;-webkit-text-stroke:0.7px #333">面试本质是潜力展示：讲好研究故事，突出个人贡献与反思</div>
<div class="a" style="left:0;top:139px;width:1021px;height:437px;background:radial-gradient(ellipse 22% 60% at 100% 25%,#eceef2 0%,rgba(255,255,255,0) 100%),radial-gradient(ellipse 45% 22% at 100% 100%,#eceef1 0%,rgba(255,255,255,0) 100%),radial-gradient(ellipse 50% 60% at 80% 70%,#f6f7f9 0%,rgba(255,255,255,0) 100%)"></div>

<div class="a h" style="right:691px;top:170px">呈现核心发现</div>
<div class="mk" style="left:336px;top:168px;background:#5f97f5"></div>
<div class="a d" style="right:691px;top:199px;text-align:right">聚焦研究的主要成果，突出数据支持的<br>关键结论，增强论证的说服力。</div>
<div class="a h" style="right:691px;top:267px">清晰研究逻辑</div>
<div class="mk" style="left:336px;top:265px;background:#5aaadb"></div>
<div class="a d" style="right:691px;top:296px;text-align:right">用简洁语言呈现问题背景、方法选择与<br>关键步骤，确保研究脉络连贯易懂。</div>
<div class="a h" style="right:691px;top:363px">突出个人贡献</div>
<div class="mk" style="left:336px;top:361px;background:#3d8fef"></div>
<div class="a d" style="right:691px;top:393px;text-align:right">明确在项目中的具体角色，强调独立完<br>成的工作和实际参与部分，展现个体学<br>术价值。</div>

<div class="mk" style="left:670px;top:181px;background:#6a8bf5"></div>
<div class="a h" style="left:691px;top:182px">体现反思能力</div>
<div class="a d" style="left:691px;top:211px">客观分析研究过程中的局限性，展示对<br>方法与结果的深入思考。</div>
<div class="mk" style="left:670px;top:276px;background:#6461e8"></div>
<div class="a h" style="left:691px;top:277px">提出改进路径</div>
<div class="a d" style="left:691px;top:307px">针对不足提出可行的优化方案或后续研<br>究方向，体现持续探索意识。</div>
<div class="mk" style="left:670px;top:373px;background:#5b3ed8"></div>
<div class="a h" style="left:691px;top:374px">展现科研潜力</div>
<div class="a d" style="left:691px;top:404px">通过系统性解决问题的过程，展示严谨<br>的思维能力和未来学术发展的可能性。</div>
<svg class="a" style="left:0;top:0" width="1021" height="576" viewBox="0 0 1021 576">
<path d="M506.88,437.64 A126.0,126.0 0 0 1 412.97,391.23 Q411.41,389.27 412.22,386.91 L418.77,367.74 Q419.58,365.37 422.08,365.26 L440.83,364.45 Q443.33,364.34 444.89,366.29 A85.5,85.5 0 0 0 507.31,397.13 Q509.80,397.20 508.54,399.35 L499.63,414.57 Q498.36,416.73 499.53,418.94 L508.22,435.48 Q509.38,437.69 506.88,437.64 Z" fill="#e7f2fc" stroke="#4a9ee6" stroke-width="1.8"/>
<path d="M399.72,371.36 A126.0,126.0 0 0 1 392.96,266.83 Q393.87,264.50 396.33,264.02 L416.21,260.11 Q418.66,259.63 420.00,261.73 L430.08,277.56 Q431.43,279.67 430.52,282.00 A85.5,85.5 0 0 0 435.02,351.48 Q436.21,353.67 433.71,353.66 L416.07,353.54 Q413.57,353.53 412.24,355.64 L402.26,371.44 Q400.93,373.55 399.72,371.36 Z" fill="#eaf4fb" stroke="#5cadda" stroke-width="1.8"/>
<path d="M403.54,245.42 A126.0,126.0 0 0 1 490.69,187.30 Q493.16,186.93 494.81,188.81 L508.13,204.07 Q509.78,205.95 508.62,208.17 L499.96,224.81 Q498.80,227.03 496.33,227.42 A85.5,85.5 0 0 0 438.41,266.04 Q437.11,268.18 435.87,266.00 L427.15,250.67 Q425.91,248.50 423.41,248.40 L404.74,247.66 Q402.25,247.56 403.54,245.42 Z" fill="#e9f0fc" stroke="#6a9df0" stroke-width="1.8"/>
<path d="M514.52,185.76 A126.0,126.0 0 0 1 608.43,232.17 Q609.99,234.13 609.18,236.49 L602.63,255.66 Q601.82,258.03 599.32,258.14 L580.57,258.95 Q578.07,259.06 576.51,257.11 A85.5,85.5 0 0 0 514.09,226.27 Q511.60,226.20 512.86,224.05 L521.77,208.83 Q523.04,206.67 521.87,204.46 L513.18,187.92 Q512.02,185.71 514.52,185.76 Z" fill="#ebedfc" stroke="#7385ee" stroke-width="1.8"/>
<path d="M621.68,252.04 A126.0,126.0 0 0 1 628.44,356.57 Q627.53,358.90 625.07,359.38 L605.19,363.29 Q602.74,363.77 601.40,361.67 L591.32,345.84 Q589.97,343.73 590.88,341.40 A85.5,85.5 0 0 0 586.38,271.92 Q585.19,269.73 587.69,269.74 L605.33,269.86 Q607.83,269.87 609.16,267.76 L619.14,251.96 Q620.47,249.85 621.68,252.04 Z" fill="#ebe9fb" stroke="#6c62de" stroke-width="1.8"/>
<path d="M617.86,377.98 A126.0,126.0 0 0 1 530.71,436.10 Q528.24,436.47 526.59,434.59 L513.27,419.33 Q511.62,417.45 512.78,415.23 L521.44,398.59 Q522.60,396.37 525.07,395.98 A85.5,85.5 0 0 0 582.99,357.36 Q584.29,355.22 585.53,357.40 L594.25,372.73 Q595.49,374.90 597.99,375.00 L616.66,375.74 Q619.15,375.84 617.86,377.98 Z" fill="#ebe7fa" stroke="#6a4dd6" stroke-width="1.8"/>
<text x="457.9" y="412.1" text-anchor="middle" font-family="Liberation Sans" font-weight="bold" font-size="20.5" fill="#3f93e2">01</text>
<text x="405.2" y="320.7" text-anchor="middle" font-family="Liberation Sans" font-weight="bold" font-size="20.5" fill="#4fa5d8">02</text>
<text x="457.9" y="229.3" text-anchor="middle" font-family="Liberation Sans" font-weight="bold" font-size="20.5" fill="#5c93ef">03</text>
<text x="563.5" y="229.3" text-anchor="middle" font-family="Liberation Sans" font-weight="bold" font-size="20.5" fill="#6a7eec">04</text>
<text x="616.2" y="320.7" text-anchor="middle" font-family="Liberation Sans" font-weight="bold" font-size="20.5" fill="#5f55d8">05</text>
<text x="563.5" y="412.1" text-anchor="middle" font-family="Liberation Sans" font-weight="bold" font-size="20.5" fill="#5a3fd0">06</text>
</svg>
</div>

<svg class="a" style="left:857px;top:423px;z-index:20" width="12" height="16" viewBox="0 0 12 16"><path d="M1 1v11.5l3-3l2.2 4.5l1.8-0.8l-2.2-4.3h4.2z" fill="#fff" stroke="#888" stroke-width="0.9" stroke-linejoin="round"/></svg>
<!-- right scrollbar -->
<div class="a" style="left:1234px;top:143px;width:25px;height:591px;background:#e6e6e6"></div>
<div class="a" style="left:1246px;top:142px;width:13px;height:530px;background:#dadada"></div>
<div class="a" style="left:1246px;top:500px;width:13px;height:33px;background:#fff"></div>

<!-- status -->
<div class="a" id="status"></div>
<div class="a" style="left:0;top:752px;width:1267px;height:1px;background:#333"></div>
<!-- status bar contents -->
<div class="a" style="left:0;top:734px;width:140px;height:18px;background:#4d4d4d;z-index:60"></div>
<svg class="a" style="left:0;top:734px;z-index:61" width="12" height="18"><path d="M1 12c0-3 2-4 4-4c0-2 2-3 3.5-2c1.5-1 3.5 0 3.5 2v4z" fill="#eee"/></svg>
<div class="a" style="left:14px;top:737px;font-size:11.2px;color:#fff;line-height:13px;z-index:61">平景龙-吉林大学正在共享</div>
<svg class="a" style="left:148px;top:736px" width="14" height="14" fill="none" stroke="#555" stroke-width="1.1"><path d="M1.5 1.5h9v11h-9zM6 6l6 7M12 6l-6 7"/></svg>
<div class="a st" style="left:177px;font-size:10.6px">中文(中国)</div>
<svg class="a" style="left:834px;top:735px" width="14" height="16" fill="none" stroke="#555" stroke-width="1.1"><path d="M2 10.5h11M2 13.5h11M4.5 6.5l3-3l3 3"/></svg>
<div class="a st" style="left:849px">备注</div>
<svg class="a" style="left:886px;top:736px" width="14" height="15" fill="none" stroke="#555" stroke-width="1.1"><path d="M1.5 1.5h11v8h-8l-3 3z"/></svg>
<div class="a st" style="left:902px">批注</div>
<div class="a" style="left:939px;top:734px;width:35px;height:18px;background:#d4d4d4"></div>
<svg class="a" style="left:948px;top:736px" width="16" height="14" fill="none" stroke="#555" stroke-width="1.1"><path d="M1.5 1.5h12v11h-12zM4.5 1.5v11M6.5 4.5h5v3h-5z"/></svg>
<svg class="a" style="left:984px;top:736px" width="15" height="14" fill="none" stroke="#555" stroke-width="1.1"><rect x="1.5" y="1.5" width="5" height="4"/><rect x="8.5" y="1.5" width="5" height="4"/><rect x="1.5" y="8" width="5" height="4"/><rect x="8.5" y="8" width="5" height="4"/></svg>
<svg class="a" style="left:1019px;top:736px" width="15" height="14" fill="none" stroke="#555" stroke-width="1.1"><path d="M1.5 1.5h5.5l0.5 1l0.5-1h5.5v11h-5.5l-0.5 0.5l-0.5-0.5h-5.5zM7.5 2.5v10M3 4.5h3M3 7h3M9 4.5h3M9 7h3"/></svg>
<svg class="a" style="left:1054px;top:736px" width="14" height="15" fill="none" stroke="#555" stroke-width="1.1"><path d="M1 1.5h12M2 1.5v7h10v-7M7 8.5v4M4.5 12.5h5M5 4h4"/></svg>
<svg class="a" style="left:1083px;top:736px" width="175" height="15" fill="none" stroke="#888" stroke-width="1"><path d="M2 7.5h7M12 7.5h87M104 4h0"/><path d="M104 7.5h6M107 4.5v6"/><rect x="58" y="2.5" width="3.5" height="10" fill="#666" stroke="none"/></svg>
<div class="a st" style="left:1205px;font-size:11.5px">122%</div>
<svg class="a" style="left:1242px;top:735px" width="16" height="16" fill="none" stroke="#666" stroke-width="1"><rect x="4.5" y="4.5" width="7" height="7" rx="1"/><path d="M8 1.5l-1.5 1.5h3zM8 14.5l-1.5-1.5h3zM1.5 8l1.5-1.5v3zM14.5 8l-1.5-1.5v3z" fill="#666"/></svg>
<!-- right scroll buttons -->
<div class="a" style="left:1246px;top:142px;width:13px;height:14px;background:#fff"></div>
<svg class="a" style="left:1246px;top:142px" width="13" height="14"><path d="M3 9l3.5-3.5l3.5 3.5z" fill="#666"/></svg>
<div class="a" style="left:1246px;top:672px;width:13px;height:13px;background:#fff"></div>
<svg class="a" style="left:1246px;top:672px" width="13" height="13"><path d="M3 5l3.5 3.5l3.5-3.5z" fill="#666"/></svg>
<div class="a" style="left:1246px;top:686px;width:13px;height:32px;background:#e6e6e6"></div>
<svg class="a" style="left:1246px;top:688px" width="13" height="28"><path d="M3 6l3.5-3.5l3.5 3.5zM3 10l3.5-3.5l3.5 3.5zM3 17l3.5 3.5l3.5-3.5zM3 21l3.5 3.5l3.5-3.5z" fill="#666"/><path d="M3 8.5h7M3 23h7" stroke="#666"/></svg>

</body></html>
